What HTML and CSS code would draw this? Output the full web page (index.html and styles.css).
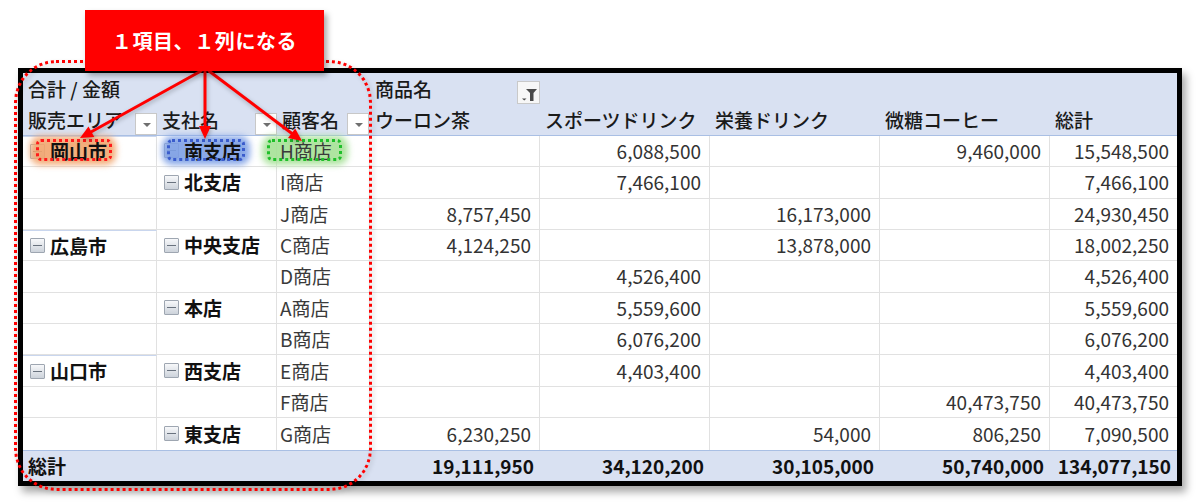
FILE: index.html
```html
<!DOCTYPE html>
<html lang="ja">
<head>
<meta charset="utf-8">
<title>ピボットテーブル</title>
<link rel="stylesheet" href="styles.css">
</head>
<body>
<div class="stage">
  <div class="pivot">
    <!-- header row 1 -->
    <div class="c h span3 pl">合計 / 金額</div>
    <div class="c h pl split">商品名<span class="filter-btn"><svg width="23" height="23" viewBox="0 0 23 23"><rect x="0.5" y="0.5" width="22" height="22" fill="#f7f7f7" stroke="#c9c9c9"/><path d="M9 8H20L16.5 12V20H13V12Z" fill="#4a4a4a"/><path d="M5 17.5H9.5L7.25 19.5Z" fill="#4a4a4a"/></svg></span></div>
    <div class="c h span4"></div>
    <!-- header row 2 -->
    <div class="c h h2 pl split">販売エリア<span class="dd"></span></div>
    <div class="c h h2 pl split">支社名<span class="dd"></span></div>
    <div class="c h h2 pl split">顧客名<span class="dd dd-last"></span></div>
    <div class="c h h2 pl">ウーロン茶</div>
    <div class="c h h2 pl">スポーツドリンク</div>
    <div class="c h h2 pl">栄養ドリンク</div>
    <div class="c h h2 pl">微糖コーヒー</div>
    <div class="c h h2 pl last">総計</div>

    <!-- data rows -->
    <div class="c g1 region"><span class="tog"></span><span class="b hl hl-orange">岡山市</span></div>
    <div class="c g2"><span class="tog"></span><span class="b hl hl-blue">南支店</span></div>
    <div class="c g3"><span class="hl hl-green">H商店</span></div>
    <div class="c n"></div><div class="c n">6,088,500</div><div class="c n"></div><div class="c n">9,460,000</div><div class="c n last">15,548,500</div>

    <div class="c g1"></div>
    <div class="c g2"><span class="tog"></span><span class="b">北支店</span></div>
    <div class="c g3">I商店</div>
    <div class="c n"></div><div class="c n">7,466,100</div><div class="c n"></div><div class="c n"></div><div class="c n last">7,466,100</div>

    <div class="c g1"></div>
    <div class="c g2"></div>
    <div class="c g3">J商店</div>
    <div class="c n">8,757,450</div><div class="c n"></div><div class="c n">16,173,000</div><div class="c n"></div><div class="c n last">24,930,450</div>

    <div class="c g1 region"><span class="tog"></span><span class="b">広島市</span></div>
    <div class="c g2"><span class="tog"></span><span class="b">中央支店</span></div>
    <div class="c g3">C商店</div>
    <div class="c n">4,124,250</div><div class="c n"></div><div class="c n">13,878,000</div><div class="c n"></div><div class="c n last">18,002,250</div>

    <div class="c g1"></div>
    <div class="c g2"></div>
    <div class="c g3">D商店</div>
    <div class="c n"></div><div class="c n">4,526,400</div><div class="c n"></div><div class="c n"></div><div class="c n last">4,526,400</div>

    <div class="c g1"></div>
    <div class="c g2"><span class="tog"></span><span class="b">本店</span></div>
    <div class="c g3">A商店</div>
    <div class="c n"></div><div class="c n">5,559,600</div><div class="c n"></div><div class="c n"></div><div class="c n last">5,559,600</div>

    <div class="c g1"></div>
    <div class="c g2"></div>
    <div class="c g3">B商店</div>
    <div class="c n"></div><div class="c n">6,076,200</div><div class="c n"></div><div class="c n"></div><div class="c n last">6,076,200</div>

    <div class="c g1 region"><span class="tog"></span><span class="b">山口市</span></div>
    <div class="c g2"><span class="tog"></span><span class="b">西支店</span></div>
    <div class="c g3">E商店</div>
    <div class="c n"></div><div class="c n">4,403,400</div><div class="c n"></div><div class="c n"></div><div class="c n last">4,403,400</div>

    <div class="c g1"></div>
    <div class="c g2"></div>
    <div class="c g3">F商店</div>
    <div class="c n"></div><div class="c n"></div><div class="c n"></div><div class="c n">40,473,750</div><div class="c n last">40,473,750</div>

    <div class="c g1 lastrow"></div>
    <div class="c g2 lastrow"><span class="tog"></span><span class="b">東支店</span></div>
    <div class="c g3 lastrow">G商店</div>
    <div class="c n lastrow">6,230,250</div><div class="c n lastrow"></div><div class="c n lastrow">54,000</div><div class="c n lastrow">806,250</div><div class="c n last lastrow">7,090,500</div>

    <!-- total row -->
    <div class="c t span3 pl b">総計</div>
    <div class="c t n b">19,111,950</div>
    <div class="c t n b">34,120,200</div>
    <div class="c t n b">30,105,000</div>
    <div class="c t n b">50,740,000</div>
    <div class="c t n b last">134,077,150</div>
  </div>

  <div class="dotted-frame"></div>

  <svg class="arrows" width="1200" height="502" viewBox="0 0 1200 502">
    <g stroke="#ff0000" stroke-width="3" fill="none" stroke-linecap="round">
      <line x1="201" y1="71" x2="91.4" y2="131.7"/>
      <line x1="205" y1="71" x2="205" y2="127"/>
      <line x1="209" y1="71" x2="291.6" y2="133.2"/>
    </g>
    <g fill="#ff0000">
      <polygon points="80,138 94.3,136.9 88.5,126.4"/>
      <polygon points="205,139 199,126 211,126"/>
      <polygon points="302,141 288,138 295.2,128.4"/>
    </g>
  </svg>

  <div class="callout">１項目、１列になる</div>
</div>
</body>
</html>
```

FILE: styles.css
```css
* { box-sizing: border-box; }

html, body {
  margin: 0;
  padding: 0;
  background: #ffffff;
}

body {
  font-family: "Noto Sans CJK JP", "Noto Sans", sans-serif;
  color: #333333;
}

.stage {
  position: relative;
  width: 1200px;
  height: 502px;
  padding: 68px 0 0 18px;
  overflow: hidden;
}

.pivot {
  display: grid;
  grid-template-columns: 134px 120px 93px 170px 170px 170px 170px 127px;
  grid-auto-rows: 31.38px;
  width: max-content;
  border: 5px solid #000000;
  background: #ffffff;
  box-shadow: 4px 6px 8px rgba(0, 0, 0, 0.35);
  font-size: 19px;
  line-height: 26px;
}

.c {
  display: flex;
  align-items: center;
  white-space: nowrap;
  border-right: 1px solid #e1e1e1;
  border-bottom: 1px solid #e1e1e1;
  min-width: 0;
}

.c.last { border-right: none; }

.span3 { grid-column: span 3; }
.span4 { grid-column: span 4; }

.h {
  background: #d9e1f2;
  border-right: none;
  border-bottom: none;
  color: #1a1a1a;
  font-weight: 500;
}

.h2 { border-bottom: 1px solid #a9bfe4; }

.pl { padding-left: 5px; }

.split {
  justify-content: space-between;
  align-items: center;
  position: relative;
}

.filter-btn {
  align-self: flex-end;
  display: block;
  width: 23px;
  height: 23px;
}
.filter-btn svg { display: block; }

.dd {
  align-self: flex-end;
  width: 22px;
  height: 22px;
  background: #ffffff;
  border: 1px solid #c8c8c8;
  position: relative;
}
.dd::after {
  content: "";
  position: absolute;
  left: 7px;
  top: 9px;
  border-left: 4px solid transparent;
  border-right: 4px solid transparent;
  border-top: 4px solid #6f6f6f;
}
.dd-last { margin-right: 1px; }

.g1, .g2 { padding-left: 7px; gap: 5px; }
.g3 { padding-left: 3px; color: #3a3a3a; }

.g1.region { border-top: 1px solid #c9d6ee; }

.n {
  justify-content: flex-end;
  padding-right: 8px;
  color: #333333;
}

.b { font-weight: 700; color: #111111; }

.lastrow { border-bottom: none; }

.t {
  background: #d9e1f2;
  border-top: 1px solid #a9bfe4;
  border-right: none;
  border-bottom: none;
}
.t.pl { padding-left: 5px; }
.t.n { padding-right: 6px; }

.tog {
  flex: none;
  width: 15px;
  height: 15px;
  border: 1px solid #9ea6b1;
  border-radius: 1px;
  background: linear-gradient(#f7f8fa, #cdd3db);
  position: relative;
}
.tog::after {
  content: "";
  position: absolute;
  left: 2px;
  right: 2px;
  top: 6px;
  height: 1px;
  background: #69727e;
}

/* highlight glows */
.hl {
  position: relative;
  z-index: 0;
}
.hl::before {
  content: "";
  position: absolute;
  z-index: -1;
  border-radius: 10px;
  filter: blur(3px);
}
.hl::after {
  content: "";
  position: absolute;
  border-radius: 5px;
  border: 3px dotted;
}

.hl-orange::before {
  left: -20px; right: -9px; top: -2px; bottom: -1px;
  background: rgba(242, 165, 110, 0.9);
}
.hl-orange::after {
  left: -14px; right: -5px; top: 1px; bottom: 3px;
  border-color: #ff1a1a;
}

.hl-blue::before {
  left: -22px; right: -9px; top: -2px; bottom: -1px;
  background: rgba(125, 160, 230, 0.9);
}
.hl-blue::after {
  left: -17px; right: -4px; top: 1px; bottom: 3px;
  border-color: #3a5ccc;
}

.hl-green::before {
  left: -18px; right: -16px; top: -2px; bottom: -1px;
  background: rgba(165, 225, 150, 0.9);
}
.hl-green::after {
  left: -13px; right: -10px; top: 1px; bottom: 3px;
  border-color: #1fbf2a;
}

/* overlays */
.dotted-frame {
  position: absolute;
  left: 14px;
  top: 60px;
  width: 358px;
  height: 431px;
  border: 3px dotted #ff0000;
  border-radius: 42px;
  filter: drop-shadow(2px 2px 2px rgba(0, 0, 0, 0.2));
  pointer-events: none;
}

.arrows {
  position: absolute;
  left: 0;
  top: 0;
  pointer-events: none;
  filter: drop-shadow(1px 2px 2px rgba(0, 0, 0, 0.25));
}

.callout {
  position: absolute;
  left: 85px;
  top: 10px;
  width: 239px;
  height: 61px;
  background: #ff0000;
  color: #ffffff;
  font-weight: 700;
  font-size: 20px;
  letter-spacing: 0.6px;
  display: flex;
  align-items: center;
  justify-content: center;
  box-shadow: 3px 4px 6px rgba(0, 0, 0, 0.35);
}
```
